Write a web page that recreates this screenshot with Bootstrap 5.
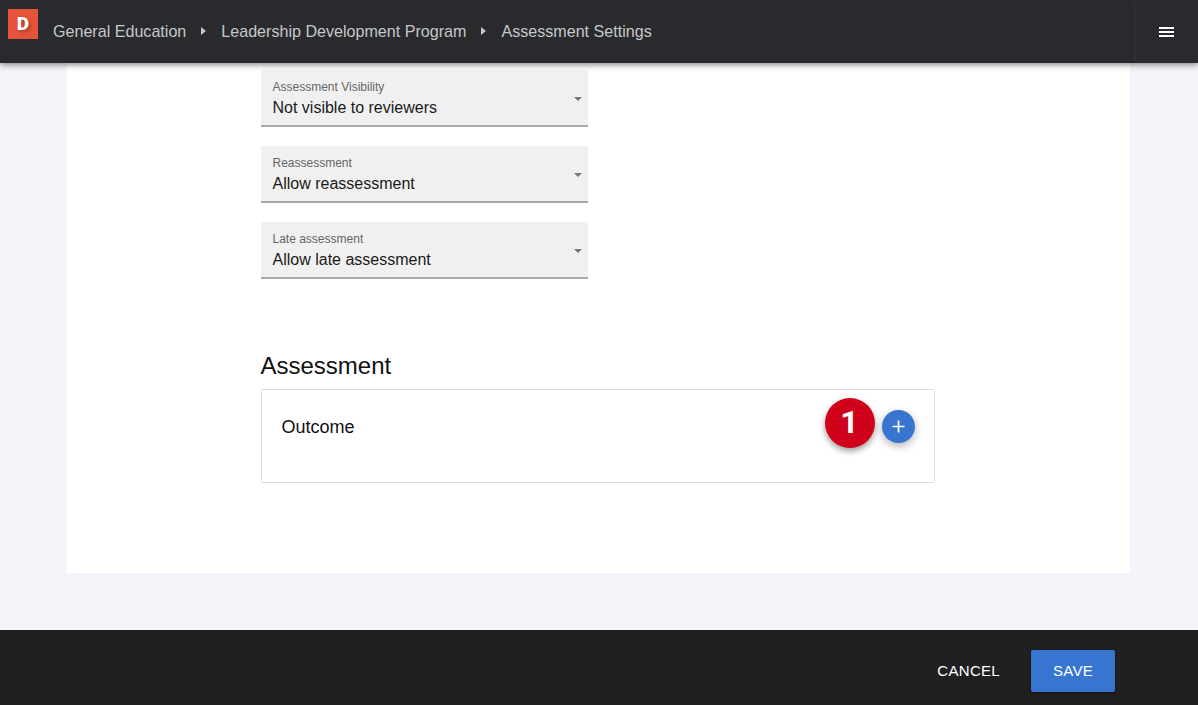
<!DOCTYPE html>
<html lang="en">
<head>
  <meta charset="UTF-8">
  <title>Assessment Settings</title>
  <meta name="viewport" content="width=device-width, initial-scale=1">
  <link href="https://cdn.jsdelivr.net/npm/bootstrap@5.3.3/dist/css/bootstrap.min.css" rel="stylesheet">
  <style>
    html,body{height:705px;overflow:hidden}
    body{background:#f4f5fa;font-family:"Liberation Sans",Arial,sans-serif;color:#111}
    .top-bar{height:63px;background:#292a2e;box-shadow:0 2px 6px rgba(0,0,0,.45);position:relative;z-index:2;padding:0}
    .brand-box{width:30px;height:30px;background:#e5533a;color:#fff;font-family:Roboto,sans-serif;font-weight:900;font-size:19px;line-height:30px;text-align:center;margin:9px 0 0 8px;text-shadow:2px 2px 3px rgba(0,0,0,.25);align-self:flex-start}
    .crumbs{color:#c6c7c9;font-size:16.1px;margin-left:15px;gap:14.5px}
    .crumb-arrow{width:0;height:0;border-left:5px solid #c6c7c9;border-top:4px solid transparent;border-bottom:4px solid transparent;margin-right:1px}
    .menu-cell{width:64px;height:58px;border-left:1px solid #36373b}
    .burger{width:15px;height:10px;border-top:2px solid #fff;border-bottom:2px solid #fff;position:relative}
    .burger::after{content:"";position:absolute;left:0;right:0;top:2px;height:2px;background:#fff}
    .content-wrap{height:567px;padding:0 68px 0 67px}
    .sheet{height:510px;background:#fff;padding:7px 0 0 193.5px}
    .fill-field{width:327.5px;height:57px;background:#f0f0f0;border-bottom:2px solid #a9a9a9;border-radius:3px 3px 0 0;padding:10px 12px 0;margin-bottom:19px;position:relative}
    .fill-label{font-size:12px;line-height:14px;color:#666}
    .fill-value{font-size:16px;line-height:20px;margin-top:4px;color:#1a1a1a}
    .fill-caret{position:absolute;right:6px;top:26.5px;width:0;height:0;border-top:4.5px solid #757575;border-left:4.5px solid transparent;border-right:4.5px solid transparent}
    .section-title{font-size:24px;line-height:28px;font-weight:400;margin:73px 0 9px;color:#111}
    .outcome-box{width:674.5px;height:94px;border:1px solid #dcdcdc;border-radius:2px;padding:26px 20px 0;font-size:18px;line-height:22px;position:relative}
    .add-round{width:33px;height:33px;border-radius:50%;background:#3875d0;border:0;color:#fff;position:absolute;left:620.5px;top:19.5px;padding:0;box-shadow:0 3px 8px rgba(0,0,0,.3)}
    .add-round svg{display:block;margin:auto}
    .step-dot{width:50px;height:50px;border-radius:50%;background:#d0021b;color:#fff;font-family:Roboto,sans-serif;font-weight:700;font-size:32px;line-height:48px;text-align:center;position:absolute;left:563px;top:8px;box-shadow:0 3px 6px rgba(0,0,0,.4)}
    .foot-bar{height:75px;background:#202020;padding:7px 83px 0 0;gap:31px}
    .btn-cancel{color:#fff;font-size:15px;padding:0;letter-spacing:.3px;border:0}
    .btn-cancel:hover{color:#fff}
    .btn-save{width:84px;height:42px;background:#3875d0;color:#fff;font-size:15px;padding:0;border:0;border-radius:2px;letter-spacing:.3px;box-shadow:0 1px 3px rgba(0,0,0,.5)}
    .btn-save:hover{background:#3875d0;color:#fff}
  </style>
</head>
<body>
<nav class="top-bar d-flex align-items-center">
  <div class="brand-box">D</div>
  <div class="crumbs d-flex align-items-center flex-grow-1">
    <span>General Education</span>
    <span class="crumb-arrow"></span>
    <span>Leadership Development Program</span>
    <span class="crumb-arrow"></span>
    <span>Assessment Settings</span>
  </div>
  <div class="menu-cell d-flex align-items-center justify-content-center"><div class="burger"></div></div>
</nav>

<div class="content-wrap">
  <div class="sheet">
    <div class="fill-field">
      <div class="fill-label">Assessment Visibility</div>
      <div class="fill-value">Not visible to reviewers</div>
      <span class="fill-caret"></span>
    </div>
    <div class="fill-field">
      <div class="fill-label">Reassessment</div>
      <div class="fill-value">Allow reassessment</div>
      <span class="fill-caret"></span>
    </div>
    <div class="fill-field">
      <div class="fill-label">Late assessment</div>
      <div class="fill-value">Allow late assessment</div>
      <span class="fill-caret"></span>
    </div>
    <h2 class="section-title">Assessment</h2>
    <div class="outcome-box">
      Outcome
      <span class="step-dot">1</span>
      <button class="add-round" type="button" aria-label="Add">
        <svg width="13" height="13" viewBox="0 0 13 13"><path d="M6.5 .5v12M.5 6.5h12" stroke="#fff" stroke-width="1.7" fill="none"/></svg>
      </button>
    </div>
  </div>
</div>

<footer class="foot-bar d-flex align-items-center justify-content-end">
  <button class="btn btn-cancel" type="button">CANCEL</button>
  <button class="btn btn-save" type="button">SAVE</button>
</footer>
<script src="https://cdn.jsdelivr.net/npm/bootstrap@5.3.3/dist/js/bootstrap.bundle.min.js"></script>
</body>
</html>
